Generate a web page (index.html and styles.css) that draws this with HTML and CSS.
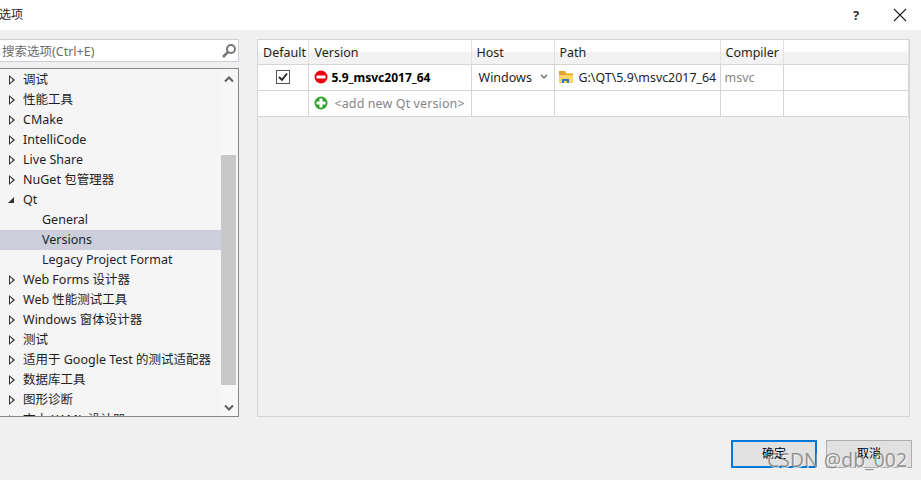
FILE: index.html
```html
<!DOCTYPE html>
<html lang="zh-CN">
  <head>
    <meta charset="UTF-8" />
    <meta name="viewport" content="width=device-width, initial-scale=1.0" />
    <title>选项</title>
    <link rel="stylesheet" href="styles.css">
  </head>
  <body>
    <div class="titlebar">
      <div class="title">选项</div>
      <div class="help">?</div>
      <svg class="close" width="14" height="14" viewBox="0 0 14 14">
        <path d="M1 1L13 13M13 1L1 13" stroke="#222" stroke-width="1.1" fill="none" />
      </svg>
    </div>

    <div class="main">
      <div class="left">
        <div class="search">
          <span class="search-text">搜索选项(Ctrl+E)</span>
          <svg width="16" height="16" viewBox="0 0 16 16">
            <circle cx="10" cy="6" r="4" stroke="#777" stroke-width="2" fill="none" />
            <path d="M7 9L2 14" stroke="#777" stroke-width="2.6" fill="none" />
          </svg>
        </div>
        <div class="tree">
          <div class="tree-list">
            <div class="row"><span class="arrow"></span>调试</div>
            <div class="row"><span class="arrow"></span>性能工具</div>
            <div class="row"><span class="arrow"></span>CMake</div>
            <div class="row"><span class="arrow"></span>IntelliCode</div>
            <div class="row"><span class="arrow"></span>Live Share</div>
            <div class="row"><span class="arrow"></span>NuGet 包管理器</div>
            <div class="row"><span class="arrow open"></span>Qt</div>
            <div class="row child">General</div>
            <div class="row child selected">Versions</div>
            <div class="row child">Legacy Project Format</div>
            <div class="row"><span class="arrow"></span>Web Forms 设计器</div>
            <div class="row"><span class="arrow"></span>Web 性能测试工具</div>
            <div class="row"><span class="arrow"></span>Windows 窗体设计器</div>
            <div class="row"><span class="arrow"></span>测试</div>
            <div class="row"><span class="arrow"></span>适用于 Google Test 的测试适配器</div>
            <div class="row"><span class="arrow"></span>数据库工具</div>
            <div class="row"><span class="arrow"></span>图形诊断</div>
            <div class="row"><span class="arrow"></span>文本 XAML 设计器</div>
          </div>
          <div class="scrollbar">
            <svg class="scroll-btn" width="17" height="20" viewBox="0 0 17 20">
              <path d="M4 12.5L8 8.5L12 12.5" stroke="#606060" stroke-width="2" fill="none" />
            </svg>
            <div class="thumb"></div>
            <svg class="scroll-btn" width="17" height="20" viewBox="0 0 17 20">
              <path d="M4 8.5L8 12.5L12 8.5" stroke="#606060" stroke-width="2" fill="none" />
            </svg>
          </div>
        </div>
      </div>

      <div class="panel">
        <table class="grid">
          <colgroup>
            <col class="col-default" />
            <col class="col-version" />
            <col class="col-host" />
            <col class="col-path" />
            <col class="col-compiler" />
            <col />
          </colgroup>
          <tr class="head">
            <th>Default</th>
            <th class="th-version">Version</th>
            <th>Host</th>
            <th>Path</th>
            <th>Compiler</th>
            <th></th>
          </tr>
          <tr>
            <td class="center">
              <svg class="check" width="14" height="14" viewBox="0 0 14 14">
                <rect x="0.5" y="0.5" width="13" height="13" fill="#fff" stroke="#555" />
                <path d="M3 7L6 10L11 3.5" stroke="#222" stroke-width="1.8" fill="none" />
              </svg>
            </td>
            <td>
              <span class="cell">
                <svg width="14" height="14" viewBox="0 0 14 14">
                  <circle cx="7" cy="7" r="6.5" fill="#e8000f" />
                  <rect x="2.5" y="5.5" width="9" height="3" fill="#fff" />
                </svg>
                <b class="version">5.9_msvc2017_64</b>
              </span>
            </td>
            <td>
              <span class="cell host">
                Windows
                <svg width="8" height="6" viewBox="0 0 8 6">
                  <path d="M1 1L4 4L7 1" stroke="#555" stroke-width="1.1" fill="none" />
                </svg>
              </span>
            </td>
            <td>
              <span class="cell folder">
                <svg width="15" height="14" viewBox="0 0 15 14">
                  <path d="M0 1H6L7 3H14V13H0Z" fill="#fbd568" />
                  <path d="M0 1H6L7 4H14V5H0Z" fill="#e0a32c" />
                  <path d="M3 13V9H10V13H8V11H5V13Z" fill="#2f7cc4" />
                </svg>
                <span class="path">G:\QT\5.9\msvc2017_64</span>
              </span>
            </td>
            <td class="muted compiler">msvc</td>
            <td></td>
          </tr>
          <tr>
            <td></td>
            <td>
              <span class="cell">
                <svg width="14" height="14" viewBox="0 0 14 14">
                  <circle cx="7" cy="7" r="6.5" fill="#2ea42a" />
                  <path d="M2.5 5.5H5.5V2.5H8.5V5.5H11.5V8.5H8.5V11.5H5.5V8.5H2.5Z" fill="#fff" />
                </svg>
                <span class="muted add">&lt;add new Qt version&gt;</span>
              </span>
            </td>
            <td></td>
            <td></td>
            <td></td>
            <td></td>
          </tr>
        </table>
      </div>
    </div>

    <div class="footer">
      <button class="btn primary">确定</button>
      <button class="btn">取消</button>
    </div>

    <div class="watermark">CSDN @db_002</div>
  </body>
</html>
```

FILE: styles.css
```css
html,
body {
  height: 100%;
}
body {
  font-family: "Noto Sans", "Noto Sans CJK SC", sans-serif;
  font-size: 12.5px;
  color: #1e1e1e;
  background-color: #f0f0f0;
  margin: 0;
  overflow: hidden;
  position: relative;
}
.titlebar {
  height: 30px;
  background: #fff;
  display: flex;
  align-items: center;
}
.title {
  flex: 1;
  font-size: 12px;
  margin: -2px 0 0 -1px;
}
.help {
  width: 40px;
  font-size: 13px;
  font-weight: bold;
  color: #333;
}
.close {
  margin-right: 14px;
}
.main {
  display: flex;
  height: 387px;
  padding-top: 9px;
  box-sizing: border-box;
}
.left {
  width: 239px;
  margin-right: 18px;
}
.search {
  height: 23px;
  box-sizing: border-box;
  background: #fff;
  border: 1px solid #ccced8;
  border-left: none;
  margin-bottom: 6px;
  display: flex;
  align-items: center;
  justify-content: space-between;
  padding: 0 1px 0 2px;
  color: #6d6d6d;
}
.tree {
  height: 349px;
  box-sizing: border-box;
  background: #f5f5f5;
  border: 1px solid #828790;
  border-left: none;
  display: flex;
  overflow: hidden;
}
.tree-list {
  flex: 1;
  overflow: hidden;
  padding-top: 1px;
}
.row {
  height: 20px;
  line-height: 20px;
  padding-left: 23px;
  position: relative;
  white-space: nowrap;
}
.row.child {
  padding-left: 42px;
}
.row.selected {
  background: #cccedb;
}
.arrow {
  position: absolute;
  left: 9px;
  top: 5px;
  width: 0;
  height: 0;
  border-left: 6px solid #333;
  border-top: 5px solid transparent;
  border-bottom: 5px solid transparent;
}
.arrow::after {
  content: "";
  position: absolute;
  left: -5px;
  top: -3px;
  border-left: 3.5px solid #f5f5f5;
  border-top: 3px solid transparent;
  border-bottom: 3px solid transparent;
}
.arrow.open {
  left: 8px;
  top: 7px;
  border: none;
  border-bottom: 6px solid #333;
  border-left: 6px solid transparent;
}
.arrow.open::after {
  display: none;
}
.scrollbar {
  width: 17px;
  display: flex;
  flex-direction: column;
  background: #f7f7f7;
}
.scroll-btn {
  display: block;
  height: 20px;
  flex: none;
}
.thumb {
  width: 15px;
  height: 230px;
  margin: 66px 0 0 0;
  background: #c8c8c8;
  flex: none;
}
.scrollbar .scroll-btn:last-child {
  margin-top: 12px;
}
.panel {
  width: 653px;
  height: 378px;
  box-sizing: border-box;
  border: 1px solid #d5d5d5;
  background: #f0f0f0;
}
.grid {
  width: 100%;
  table-layout: fixed;
  border-collapse: collapse;
}
.col-default {
  width: 50px;
}
.col-version {
  width: 163px;
}
.col-host {
  width: 83px;
}
.col-path {
  width: 166px;
}
.col-compiler {
  width: 63px;
}
.grid tr {
  height: 26px;
}
.grid tr.head {
  height: 24px;
}
.grid th {
  font-weight: normal;
  text-align: left;
  padding: 2px 0 0 5px;
  background: linear-gradient(#fff, #fff 45%, #f2f2f2 55%, #f2f2f2);
  border-right: 1px solid #e2e2e2;
  border-bottom: 1px solid #d5d5d5;
}
.grid th.th-version {
  padding-left: 6px;
}
.grid td {
  padding: 0 0 0 5px;
  background: #fff;
  border-right: 1px solid #d5d5d5;
  border-bottom: 1px solid #d5d5d5;
  white-space: nowrap;
  overflow: hidden;
}
.grid td.center {
  text-align: center;
  padding: 0;
}
.check {
  display: block;
  margin: 0 auto;
}
.cell {
  display: flex;
  align-items: center;
  gap: 4px;
}
.version {
  font-size: 12px;
  font-weight: bold;
  color: #000;
}
.host {
  gap: 8px;
  margin-left: 2px;
}
.folder {
  gap: 5px;
  margin-left: -1px;
}
.path {
  font-size: 12.4px;
}
.muted {
  color: #858585;
}
.compiler {
  text-indent: -1px;
}
.add {
  margin-left: 3px;
  letter-spacing: 0.1px;
}
.footer {
  display: flex;
  justify-content: flex-end;
  gap: 9px;
  padding: 23px 9px 0 0;
}
.btn {
  width: 86px;
  height: 28px;
  font: inherit;
  font-size: 12px;
  color: #000;
  background: #e1e1e1;
  border: 1px solid #adadad;
  padding: 0 0 2px;
}
.btn.primary {
  border: 2px solid #0078d7;
}
.watermark {
  position: absolute;
  left: 767px;
  top: 447px;
  font-size: 19.4px;
  line-height: 26px;
  color: rgba(110, 110, 110, 0.7);
  text-shadow: 1px 1px 0 rgba(255, 255, 255, 0.7);
  white-space: nowrap;
}
```
